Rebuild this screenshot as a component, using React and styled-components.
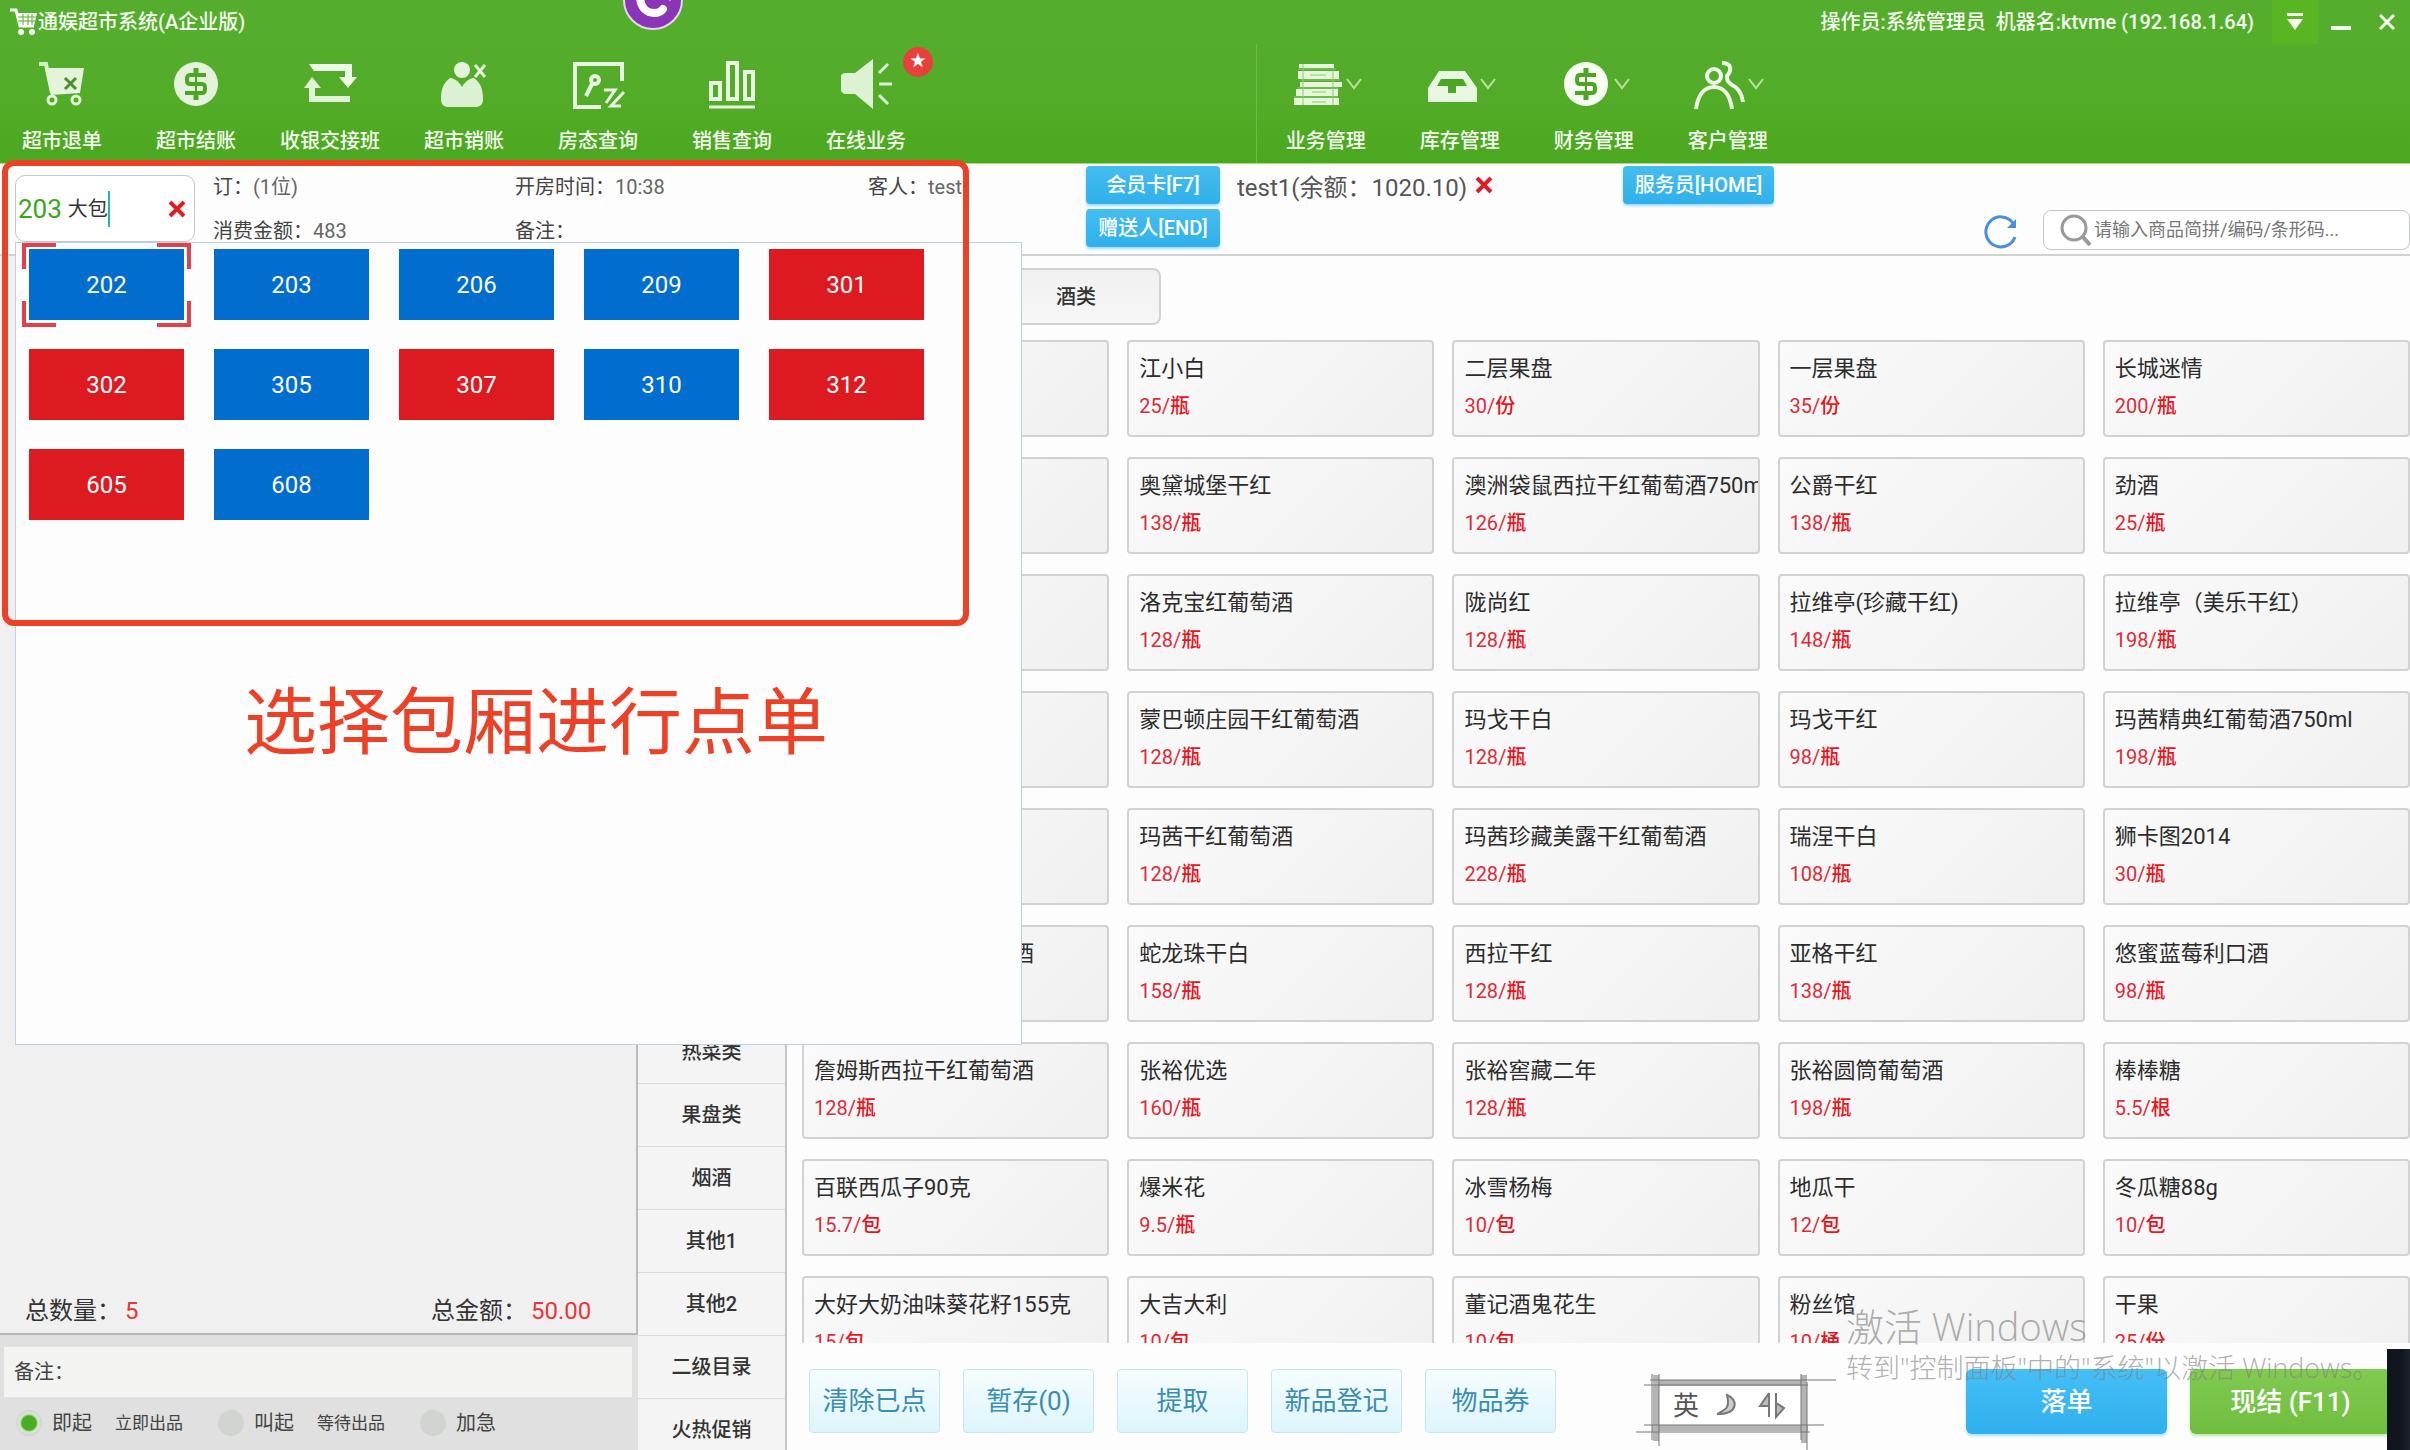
import React from 'react';
import styled, { createGlobalStyle } from 'styled-components';

const GlobalStyle = createGlobalStyle`
  * {
    box-sizing: border-box;
  }

  body {
    margin: 0;
    overflow: hidden;
    background: #fdfdfd;
    color: #333;
    font-family: Roboto, "Noto Sans CJK SC", sans-serif;
    font-size: 20px;
    line-height: 24px;
  }

  button,
  input {
    margin: 0;
    padding: 0;
    border: 0;
    background: none;
    color: inherit;
    font: inherit;
  }
`;

const Page = styled.div`
  position: relative;
  display: flex;
  flex-direction: column;
  height: 100vh;
  overflow: hidden;
`;

/* header */

const Header = styled.header`
  position: relative;
  flex: none;
  height: 164px;
  color: #f4fbef;
  background: linear-gradient(#55ad2d, #53ac28 60%, #4aa81f);
  border-bottom: 1px solid #a5dc85;
`;

const TitleBar = styled.div`
  display: flex;
  align-items: center;
  height: 44px;
`;

const AppTitle = styled.div`
  display: flex;
  flex: 1;
  align-items: center;
  gap: 1px;
  padding-left: 10px;
  font-weight: 500;
`;

const Operator = styled.div`
  margin-right: 18px;
  white-space: pre;
  font-weight: 500;
`;

const WindowButton = styled.button`
  display: flex;
  align-items: center;
  justify-content: center;
  width: 46px;
  height: 44px;
  background: ${props => (props.$active ? '#5ab522' : 'none')};
`;

const Toolbar = styled.nav`
  display: flex;
  height: 119px;
`;

const ToolGroup = styled.div`
  display: flex;
  flex: ${props => props.$grow} 1 0;
  gap: 12px;
  padding-left: ${props => (props.$divided ? '8px' : '1px')};
  border-left: ${props => (props.$divided ? '1px solid #6cbc45' : '0')};
`;

const ToolButton = styled.button`
  position: relative;
  display: flex;
  flex-direction: column;
  align-items: center;
  gap: 17px;
  width: 122px;
  padding-top: 12px;
  font-weight: 500;
`;

const ToolIcon = styled.span`
  display: flex;
  align-items: center;

  svg {
    display: block;
  }
`;

const NewBadge = styled.span`
  position: absolute;
  top: 3px;
  right: -6px;
  width: 30px;
  height: 30px;
  border-radius: 50%;
  background: #e8403c;
  color: #fff;
  font-size: 16px;
  line-height: 28px;
`;

const FloatLogo = styled.svg`
  position: absolute;
  top: -30px;
  left: 25.85%;
`;

/* info bar */

const InfoBar = styled.section`
  display: flex;
  flex: none;
  height: 92px;
  padding-left: 15px;
  border-bottom: 2px solid #cfd2d4;
`;

const RoomField = styled.div`
  position: relative;
  z-index: 3;
  display: flex;
  align-items: center;
  width: 180px;
  height: 67px;
  margin: 11px 18px 0 0;
  padding: 0 8px 0 2px;
  border: 1px solid #c4c7ca;
  border-radius: 10px;
  background: #fff;
`;

const RoomNo = styled.label`
  margin-right: 6px;
  color: #3ba51f;
  font-size: 26px;
`;

const RoomName = styled.input`
  width: 42px;
  border-right: 2px solid #27b3ae;
  line-height: 36px;
  outline: none;
`;

const ClearButton = styled.button`
  display: flex;
  margin-left: ${props => (props.$push ? 'auto' : '0')};
`;

const InfoGrid = styled.dl`
  display: grid;
  grid-template-columns: 302px 353px 218px;
  grid-auto-rows: 44px;
  align-content: start;
  margin: 1px 0 0;

  div {
    display: flex;
    align-items: center;
  }

  dt {
    color: #444;
  }

  dd {
    margin: 0;
    color: #666;
  }
`;

const ShortcutList = styled.div`
  display: flex;
  flex-direction: column;
  gap: 5px;
  margin: 2px 17px 0 0;
`;

const Shortcut = styled.button`
  width: ${props => props.$width || '134px'};
  height: 38px;
  border-radius: 4px;
  background: linear-gradient(#45bdf1, #2fb0ea);
  box-shadow: 0 2px 3px #9bdcf8;
  color: #fff;
  font-weight: 500;
`;

const Member = styled.div`
  display: flex;
  flex: 0 0 386px;
  gap: 8px;
  padding-top: 12px;
  color: #555;
  font-size: 24px;
`;

const Search = styled.div`
  display: flex;
  flex: 1;
  align-items: flex-end;
  justify-content: flex-end;
  gap: 25px;
  padding-bottom: 4px;
  padding-top: 2px;
`;

const Waiter = styled.div`
  padding-top: 2px;
`;

const RefreshButton = styled.button`
  display: flex;
  margin-bottom: 1px;
`;

const SearchBox = styled.label`
  display: flex;
  align-items: center;
  gap: 2px;
  width: 367px;
  height: 40px;
  padding-left: 16px;
  border: 1px solid #c4c7ca;
  border-radius: 8px;
  background: #fff;

  input {
    flex: 1;
    min-width: 0;
    font-size: 18px;
    outline: none;
  }

  input::placeholder {
    color: #777;
    opacity: 1;
  }
`;

/* main area */

const Main = styled.main`
  display: flex;
  flex: 1;
  min-height: 0;
`;

const OrderPanel = styled.aside`
  display: flex;
  flex: none;
  flex-direction: column;
  width: 638px;
  background: #dfe0df;
`;

const OrderList = styled.div`
  display: flex;
  flex: 1;
  align-items: flex-end;
  padding: 0 25px 8px;
  border-right: 2px solid #bbb;
  border-bottom: 2px solid #b5b5b5;
  background: #f0f0f0;
  font-size: 24px;
  line-height: 28px;
`;

const Total = styled.div`
  display: flex;
  flex: none;
  width: ${props => props.$width || 'auto'};
  gap: 4px;

  strong {
    color: #e8363d;
    font-weight: 400;
  }
`;

const Remark = styled.label`
  display: flex;
  flex: none;
  align-items: center;
  height: 50px;
  margin: 12px 6px 0 4px;
  padding-left: 10px;
  background: #f3f4f2;
  color: #444;

  input {
    flex: 1;
    outline: none;
  }
`;

const ServeOptions = styled.div`
  display: flex;
  flex: none;
  align-items: center;
  height: 53px;
  padding: 0 0 2px 16px;
  color: #444;
`;

const ServeOption = styled.label`
  display: flex;
  align-items: center;
  width: 202px;

  small {
    margin-left: 23px;
    font-size: 17px;
  }
`;

const Radio = styled.input`
  appearance: none;
  width: 26px;
  height: 26px;
  margin-right: 10px;
  border: 1px solid #d0d2d0;
  border-radius: 50%;
  background: #d2d4d2;

  &:checked {
    background: radial-gradient(circle, #48ad22 7px, #d5e3cf 9px);
  }
`;

const CategoryList = styled.div`
  display: flex;
  flex: none;
  flex-direction: column;
  justify-content: flex-end;
  width: 149px;
  overflow: hidden;
  border-right: 2px solid #c3c6c9;
  background: #f4f4f4;
`;

const Categories = styled.ul`
  margin: 0 0 -12px;
  padding: 0;
  list-style: none;
`;

const Category = styled.button`
  display: block;
  width: 100%;
  height: 63px;
  border-bottom: 1px solid #dadada;
  font-weight: 500;
`;

const Catalog = styled.section`
  display: flex;
  flex: 1;
  flex-direction: column;
  min-width: 0;
  padding: 12px 0 0 15px;
`;

const Tabs = styled.div`
  display: flex;
  flex: none;
  padding-left: 189px;
  margin-bottom: 15px;
`;

const Tab = styled.button`
  width: 170px;
  height: 57px;
  border: 2px solid #d2d2d3;
  border-radius: 8px;
  background: linear-gradient(#f1f1f1, #f6f6f6);
  font-weight: 500;
`;

const ProductGrid = styled.div`
  display: grid;
  flex: 1;
  grid-template-columns: repeat(5, minmax(0, 1fr));
  grid-auto-rows: 97px;
  gap: 20px 18px;
  min-height: 0;
  overflow: hidden;
`;

const Product = styled.button`
  padding: 0 0 4px 10px;
  overflow: hidden;
  border: 2px solid #d2d2d3;
  border-radius: 4px;
  background: linear-gradient(135deg, #fafafa, #f0f0f1);
  text-align: left;
  white-space: nowrap;
`;

const ProductName = styled.div`
  color: #2c2c2c;
  font-size: 22px;
  line-height: 38px;
`;

const Price = styled.div`
  color: #dd2c38;
  line-height: 36px;

  b {
    color: #e8141e;
    font-weight: 500;
  }
`;

const ActionBar = styled.footer`
  display: flex;
  flex: none;
  gap: 23px;
  height: 107px;
  padding: 26px 19px 0 7px;
`;

const Action = styled.button`
  width: 131px;
  height: 64px;
  border: 1px solid #c8e6ee;
  border-radius: 4px;
  background: linear-gradient(#f6fdff, #dcf5fb);
  color: #3b8db0;
  font-size: 26px;
`;

const Submit = styled.button`
  width: 201px;
  height: 65px;
  margin-left: ${props => (props.$first ? 'auto' : '0')};
  border-radius: 6px;
  background: ${props => (props.$green
    ? 'linear-gradient(#80cb50, #6fbd3e)'
    : 'linear-gradient(#45bff6, #2fb0ee)')};
  box-shadow: 0 2px 3px ${props => (props.$green ? '#bfe5a8' : '#a5e3fb')};
  color: #fff;
  font-size: 26px;
  font-weight: 500;
`;

/* room picker, opened over the main area */

const RoomPopup = styled.div`
  position: absolute;
  top: 242px;
  left: 15px;
  z-index: 2;
  display: grid;
  grid-template-columns: repeat(5, 155px);
  grid-auto-rows: 71px;
  gap: 29px 30px;
  align-content: start;
  width: 1007px;
  height: 803px;
  padding: 6px 13px;
  border: 1px solid #b9d3de;
  background: #fdfdfd;
`;

const Room = styled.button`
  position: relative;
  background: ${props => (props.$busy ? '#dd1a20' : '#006dcf')};
  color: #fff;
  font-size: 24px;
`;

const Corners = styled.svg`
  position: absolute;
  top: -6px;
  left: -7px;
`;

/* notes on top of the screen */

const Frame = styled.div`
  position: absolute;
  top: 160px;
  left: 2px;
  z-index: 4;
  width: 967px;
  height: 466px;
  border: 6px solid #ec4126;
  border-radius: 12px;
  pointer-events: none;
`;

const Caption = styled.div`
  position: absolute;
  top: 671px;
  left: 244px;
  z-index: 4;
  color: #ec4126;
  font-size: 73px;
  line-height: 104px;
`;

const Watermark = styled.div`
  position: absolute;
  right: 29px;
  bottom: 62px;
  z-index: 4;
  width: 535px;
  color: rgba(130, 130, 130, 0.65);
  font-family: "Open Sans", "Noto Sans CJK SC", sans-serif;
  font-size: 27px;
  font-weight: 300;
  line-height: 40px;
  white-space: nowrap;
  pointer-events: none;

  strong {
    display: block;
    font-size: 38px;
    font-weight: 300;
    line-height: 44px;
  }
`;

const ImeBar = styled.div`
  position: absolute;
  bottom: 0;
  left: 1630px;
  z-index: 4;
  width: 210px;
  height: 84px;

  svg {
    display: block;
  }

  span {
    position: absolute;
    top: 22px;
    left: 43px;
    color: #555;
    font-size: 26px;
    line-height: 36px;
  }
`;

const Dock = styled.div`
  position: absolute;
  right: 0;
  bottom: 0;
  z-index: 5;
  width: 23px;
  height: 101px;
  background: linear-gradient(90deg, #10151d 60%, #1d222b);
`;

const rooms = [
  { no: '202', selected: true },
  { no: '203' },
  { no: '206' },
  { no: '209' },
  { no: '301', busy: true },
  { no: '302', busy: true },
  { no: '305' },
  { no: '307', busy: true },
  { no: '310' },
  { no: '312', busy: true },
  { no: '605', busy: true },
  { no: '608' },
];

const categories = ['热菜类', '果盘类', '烟酒', '其他1', '其他2', '二级目录', '火热促销'];

const products = [
  null,
  ['江小白', '25', '瓶'],
  ['二层果盘', '30', '份'],
  ['一层果盘', '35', '份'],
  ['长城迷情', '200', '瓶'],
  null,
  ['奥黛城堡干红', '138', '瓶'],
  ['澳洲袋鼠西拉干红葡萄酒750ml', '126', '瓶'],
  ['公爵干红', '138', '瓶'],
  ['劲酒', '25', '瓶'],
  null,
  ['洛克宝红葡萄酒', '128', '瓶'],
  ['陇尚红', '128', '瓶'],
  ['拉维亭(珍藏干红)', '148', '瓶'],
  ['拉维亭（美乐干红）', '198', '瓶'],
  null,
  ['蒙巴顿庄园干红葡萄酒', '128', '瓶'],
  ['玛戈干白', '128', '瓶'],
  ['玛戈干红', '98', '瓶'],
  ['玛茜精典红葡萄酒750ml', '198', '瓶'],
  null,
  ['玛茜干红葡萄酒', '128', '瓶'],
  ['玛茜珍藏美露干红葡萄酒', '228', '瓶'],
  ['瑞涅干白', '108', '瓶'],
  ['狮卡图2014', '30', '瓶'],
  ['詹姆斯美乐干红葡萄酒', '128', '瓶'],
  ['蛇龙珠干白', '158', '瓶'],
  ['西拉干红', '128', '瓶'],
  ['亚格干红', '138', '瓶'],
  ['悠蜜蓝莓利口酒', '98', '瓶'],
  ['詹姆斯西拉干红葡萄酒', '128', '瓶'],
  ['张裕优选', '160', '瓶'],
  ['张裕窖藏二年', '128', '瓶'],
  ['张裕圆筒葡萄酒', '198', '瓶'],
  ['棒棒糖', '5.5', '根'],
  ['百联西瓜子90克', '15.7', '包'],
  ['爆米花', '9.5', '瓶'],
  ['冰雪杨梅', '10', '包'],
  ['地瓜干', '12', '包'],
  ['冬瓜糖88g', '10', '包'],
  ['大好大奶油味葵花籽155克', '15', '包'],
  ['大吉大利', '10', '包'],
  ['董记酒鬼花生', '10', '包'],
  ['粉丝馆', '10', '桶'],
  ['干果', '25', '份'],
];

const Dollar = ({ color }) => (
  <>
    <circle cx="28" cy="28" r="22" fill={color} />
    <g fill="none" stroke="#4da524">
      <path d="M38 19H22q-3 0-3 4v1q0 4 3 4h12q3 0 3 4v1q0 4-3 4H17" strokeWidth="4" />
      <path d="M28 12v7M28 37v7" strokeWidth="5" />
      <path d="M28 19v18" strokeWidth="2" />
    </g>
  </>
);

const glyphs = {
  cart: (
    <>
      <path d="M5 8h7l6 29" fill="none" stroke="#d5efc9" strokeWidth="4" />
      <path d="M11 12h39l-4 25-29 2z" fill="#e3f4da" />
      <path d="M31 22l11 11M42 22L31 33" stroke="#4a8f2c" strokeWidth="3" />
      <circle cx="18" cy="44" r="4" fill="none" stroke="#e3f4da" strokeWidth="3" />
      <circle cx="42" cy="44" r="4" fill="none" stroke="#e3f4da" strokeWidth="3" />
    </>
  ),
  dollar: <Dollar color="#e3f4da" />,
  swap: (
    <>
      <path d="M7 8h43v13h5l-9 11-9-11h6v-6H12z" fill="#edf8e7" />
      <path d="M2 32l8-11 9 11h-6v8h35v6H7V32z" fill="#e0f3d6" />
    </>
  ),
  person: (
    <>
      <circle cx="26" cy="14" r="8" fill="#e3f4da" />
      <path d="M5 43c0-9 2-16 9-21 3 0 8 2 12 9 4-7 9-9 12-9 7 5 9 12 9 21 0 6-3 8-8 8H13c-5 0-8-2-8-8z" fill="#dcf1d2" />
      <path d="M39 9l10 12M49 9L39 21" stroke="#e3f4da" strokeWidth="3" />
    </>
  ),
  room: (
    <g fill="none" stroke="#e8f6e1" strokeWidth="4">
      <path d="M52 25V8H5v43h26" />
      <circle cx="25" cy="24" r="4" />
      <path d="M22 28l-6 12" />
      <path d="M34 34h11l-9 13M54 36L41 50h10" strokeWidth="3" />
    </g>
  ),
  bars: (
    <g fill="none" stroke="#e8f6e1" strokeWidth="4">
      <path d="M7 27h9v16H7zM24 7h9v36h-9zM41 16h8v27h-8z" />
      <path d="M5 51h46" strokeWidth="3" />
    </g>
  ),
  speaker: (
    <>
      <path d="M3 21c0-3 2-4 5-4h9L35 3v50L17 38H8c-3 0-5-2-5-4z" fill="#ddf2d3" />
      <path d="M41 17l9-9M41 28h13M41 39l9 9" stroke="#dcf1d2" strokeWidth="3" />
    </>
  ),
  books: (
    <>
      <path d="M9 8h35v4H9zM8 15h41v8H8zM10 26h42v5H10zM6 33h42v7H6zM4 42h45v7H4z" fill="#e6f6dc" />
      <path d="M8 13h38M10 24h40M7 32h42M4 41h44M13 8v41M43 15v34" stroke="#8bcb6c" strokeWidth="1" />
      <path d="M22 36h14M22 46h14M20 19h16" stroke="#8bcb6c" strokeWidth="1" />
    </>
  ),
  tray: (
    <>
      <path d="M15 15h26l12 17v14H4V32z" fill="#e8f7df" />
      <path d="M17 23h22l4 7H32v7h-8v-7H13z" fill="#4da524" />
    </>
  ),
  money: <Dollar color="#f7fff2" />,
  users: (
    <g fill="none" stroke="#eef9e8" strokeWidth="4">
      <circle cx="22" cy="20" r="7" />
      <path d="M4 53c2-15 9-22 18-22s16 7 18 22" />
      <path d="M30 7c10 0 10 7 5 13 0 5 1 6 5 9 7 3 10 10 11 17" />
    </g>
  ),
};

const tools = [
  { label: '超市退单', icon: 'cart' },
  { label: '超市结账', icon: 'dollar' },
  { label: '收银交接班', icon: 'swap' },
  { label: '超市销账', icon: 'person' },
  { label: '房态查询', icon: 'room' },
  { label: '销售查询', icon: 'bars' },
  { label: '在线业务', icon: 'speaker', isNew: true },
];

const menus = [
  { label: '业务管理', icon: 'books' },
  { label: '库存管理', icon: 'tray' },
  { label: '财务管理', icon: 'money' },
  { label: '客户管理', icon: 'users' },
];

const Glyph = ({ name }) => (
  <svg width="56" height="56" viewBox="0 0 56 56">{glyphs[name]}</svg>
);

const RedCross = () => (
  <svg width="18" height="18" viewBox="0 0 18 18">
    <path d="M2 2l14 14M16 2L2 16" stroke="#dc1f26" strokeWidth="4" />
  </svg>
);

const CartLogo = () => (
  <svg width="27" height="28" viewBox="0 0 27 28">
    <path d="M0 2h6l4 16h14" fill="none" stroke="#fff" strokeWidth="3" />
    <path d="M6 5h21l-3 13H9z" fill="#fff" />
    <path d="M8 9h18M8 13h17M13 6v11M18 6v11M22 6v11" stroke="#55ad2d" strokeWidth="1" />
    <circle cx="11" cy="24" r="3" fill="#fff" />
    <circle cx="22" cy="24" r="3" fill="#fff" />
  </svg>
);

class App extends React.Component {

  state = {
    serve: '即起',
    roomName: '大包',
    keyword: '',
  }

  handleServeChange = (e) => {
    this.setState({ serve: e.target.value });
  }

  handleRoomChange = (e) => {
    this.setState({ roomName: e.target.value });
  }

  handleSearch = (e) => {
    this.setState({ keyword: e.target.value });
  }

  renderServeOption(value, hint) {
    return (
      <ServeOption>
        <Radio
          type="radio"
          name="serve"
          value={value}
          checked={this.state.serve === value}
          onChange={this.handleServeChange} />
        {value}
        {hint && <small>{hint}</small>}
      </ServeOption>
    );
  }

  renderHeader() {
    return (
      <Header>
        <TitleBar>
          <AppTitle><CartLogo />通娱超市系统(A企业版)</AppTitle>
          <Operator>操作员:系统管理员  机器名:ktvme (192.168.1.64)</Operator>
          <WindowButton $active aria-label="菜单">
            <svg width="18" height="18" viewBox="0 0 18 18">
              <path d="M1 0h16v3H1zM1 6h16L9 17z" fill="#f4fbef" />
            </svg>
          </WindowButton>
          <WindowButton aria-label="最小化">
            <svg width="20" height="18" viewBox="0 0 20 18">
              <path d="M0 13h20v4H0z" fill="#f4fbef" />
            </svg>
          </WindowButton>
          <WindowButton aria-label="关闭">
            <svg width="16" height="16" viewBox="0 0 16 16">
              <path d="M1 1l14 14M15 1L1 15" stroke="#f4fbef" strokeWidth="3" />
            </svg>
          </WindowButton>
        </TitleBar>
        <Toolbar>
          <ToolGroup $grow={1260}>
            {tools.map(tool => (
              <ToolButton key={tool.label}>
                <ToolIcon><Glyph name={tool.icon} /></ToolIcon>
                {tool.label}
                {tool.isNew && <NewBadge>★</NewBadge>}
              </ToolButton>
            ))}
          </ToolGroup>
          <ToolGroup $grow={1150} $divided>
            {menus.map(menu => (
              <ToolButton key={menu.label}>
                <ToolIcon>
                  <Glyph name={menu.icon} />
                  <svg width="16" height="12" viewBox="0 0 16 12">
                    <path d="M1 1l7 9 7-9" fill="none" stroke="#b9e39f" strokeWidth="2" />
                  </svg>
                </ToolIcon>
                {menu.label}
              </ToolButton>
            ))}
          </ToolGroup>
        </Toolbar>
        <FloatLogo width="60" height="60" viewBox="0 0 60 60">
          <circle cx="30" cy="30" r="29" fill="#8a35b5" stroke="#e4d8ec" strokeWidth="2" />
          <path d="M17 28c1 10 7 15 14 15 4 0 7-1 9-4" fill="none" stroke="#fff" strokeWidth="8" strokeLinecap="round" />
          <path d="M43 26l5 4" stroke="#d9b8ea" strokeWidth="3" />
        </FloatLogo>
      </Header>
    );
  }

  renderInfo() {
    return (
      <InfoBar>
        <RoomField>
          <RoomNo htmlFor="room">203</RoomNo>
          <RoomName id="room" value={this.state.roomName} onChange={this.handleRoomChange} />
          <ClearButton $push aria-label="清除包厢"><RedCross /></ClearButton>
        </RoomField>
        <InfoGrid>
          <div><dt>订：</dt><dd>(1位)</dd></div>
          <div><dt>开房时间：</dt><dd>10:38</dd></div>
          <div><dt>客人：</dt><dd>test</dd></div>
          <div><dt>消费金额：</dt><dd>483</dd></div>
          <div><dt>备注：</dt><dd /></div>
        </InfoGrid>
        <ShortcutList>
          <Shortcut>会员卡[F7]</Shortcut>
          <Shortcut>赠送人[END]</Shortcut>
        </ShortcutList>
        <Member>
          <span>test1(余额：1020.10)</span>
          <ClearButton aria-label="清除会员"><RedCross /></ClearButton>
        </Member>
        <Waiter>
          <Shortcut $width="151px">服务员[HOME]</Shortcut>
        </Waiter>
        <Search>
          <RefreshButton aria-label="刷新">
            <svg width="34" height="36" viewBox="0 0 34 36">
              <path d="M31 24a15 15 0 1 1-2-14" fill="none" stroke="#4a90d9" strokeWidth="3" />
              <path d="M32 6v9h-9z" fill="#4a90d9" />
            </svg>
          </RefreshButton>
          <SearchBox>
            <svg width="32" height="32" viewBox="0 0 32 32">
              <circle cx="14" cy="14" r="12" fill="none" stroke="#999" strokeWidth="3" />
              <path d="M23 23l7 8" stroke="#999" strokeWidth="4" />
            </svg>
            <input
              aria-label="搜索商品"
              placeholder="请输入商品简拼/编码/条形码..."
              value={this.state.keyword}
              onChange={this.handleSearch} />
          </SearchBox>
        </Search>
      </InfoBar>
    );
  }

  render() {
    return (
      <Page>
        <GlobalStyle />
        {this.renderHeader()}
        {this.renderInfo()}
        <Main>
          <OrderPanel>
            <OrderList>
              <Total $width="406px"><span>总数量：</span><strong>5</strong></Total>
              <Total><span>总金额：</span><strong>50.00</strong></Total>
            </OrderList>
            <Remark>备注：<input /></Remark>
            <ServeOptions>
              {this.renderServeOption('即起', '立即出品')}
              {this.renderServeOption('叫起', '等待出品')}
              {this.renderServeOption('加急')}
            </ServeOptions>
          </OrderPanel>
          <CategoryList>
            <Categories>
              {categories.map(name => (
                <li key={name}><Category>{name}</Category></li>
              ))}
            </Categories>
          </CategoryList>
          <Catalog>
            <Tabs><Tab>酒类</Tab></Tabs>
            <ProductGrid>
              {products.map((product, i) => (
                <Product key={i}>
                  {product && <ProductName>{product[0]}</ProductName>}
                  {product && <Price>{product[1]}/<b>{product[2]}</b></Price>}
                </Product>
              ))}
            </ProductGrid>
            <ActionBar>
              <Action>清除已点</Action>
              <Action>暂存(0)</Action>
              <Action>提取</Action>
              <Action>新品登记</Action>
              <Action>物品券</Action>
              <Submit $first>落单</Submit>
              <Submit $green>现结 (F11)</Submit>
            </ActionBar>
          </Catalog>
        </Main>
        <RoomPopup>
          {rooms.map(room => (
            <Room key={room.no} $busy={room.busy}>
              {room.no}
              {room.selected && (
                <Corners width="169" height="84" viewBox="0 0 169 84">
                  <path
                    d="M2 26V2h32M135 2h32v24M167 58v24h-32M34 82H2V58"
                    fill="none"
                    stroke="#e0414a"
                    strokeWidth="4"
                  />
                </Corners>
              )}
            </Room>
          ))}
        </RoomPopup>
        <Frame />
        <Caption>选择包厢进行点单</Caption>
        <Watermark>
          <strong>激活 Windows</strong>
          转到"控制面板"中的"系统"以激活 Windows。
        </Watermark>
        <ImeBar>
          <svg width="210" height="84" viewBox="0 0 210 84">
            <path d="M28 18h144v42H28z" fill="#fff" />
            <path d="M24 17h152M22 62h156M26 9v66M174 9v68" stroke="#b4b4b4" strokeWidth="6" />
            <path d="M14 19h164M20 14h186M14 59h180M6 66h174" fill="none" stroke="#777" strokeWidth="1" />
            <path d="M22 8v66M29 8v72M171 8v66M177 16v68" fill="none" stroke="#777" strokeWidth="1" />
            <path d="M97 29c11 4 12 19-9 19-2 0 8-4 9-7 2-4 1-8 0-12z" fill="#ccc" stroke="#777" strokeWidth="2" />
            <path d="M139 27v24M139 27l-9 13h9M146 27v24l8-9-8-5" fill="#bbb" stroke="#777" strokeWidth="2" />
          </svg>
          <span>英</span>
        </ImeBar>
        <Dock />
      </Page>
    );
  }
};

export default App;
